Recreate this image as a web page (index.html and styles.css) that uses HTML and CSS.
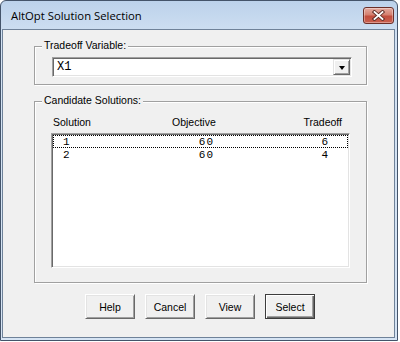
FILE: index.html
```html
<!DOCTYPE html>
<html lang="en">
<head>
    <meta charset="UTF-8">
    <title>AltOpt Solution Selection</title>
    <link rel="stylesheet" href="styles.css">
</head>
<body>
    <div class="window">
        <div class="titlebar">
            <span class="title">AltOpt Solution Selection</span>
            <span class="close-btn">
                <svg width="13" height="11" viewBox="0 0 13 11">
                    <path d="M2.5 2 L10.5 9 M10.5 2 L2.5 9" stroke="#5a2a24" stroke-width="3.6" stroke-linecap="square" fill="none"/>
                    <path d="M2.5 2 L10.5 9 M10.5 2 L2.5 9" stroke="#ffffff" stroke-width="1.8" stroke-linecap="square" fill="none"/>
                </svg>
            </span>
        </div>

        <div class="client">
            <div class="group group-var">
                <span class="group-title">Tradeoff Variable:</span>
                <div class="combo">
                    <span class="combo-text">X1</span>
                    <span class="combo-btn"><span class="arrow"></span></span>
                </div>
            </div>

            <div class="group group-cand">
                <span class="group-title">Candidate Solutions:</span>
                <div class="list-head">
                    <span>Solution</span>
                    <span>Objective</span>
                    <span class="head-right">Tradeoff</span>
                </div>
                <div class="listbox">
                    <div class="row focused"><span class="c1">1</span><span class="c2">60</span><span class="c3">6</span></div>
                    <div class="row"><span class="c1">2</span><span class="c2">60</span><span class="c3">4</span></div>
                </div>
            </div>

            <div class="buttons">
                <button class="btn">Help</button>
                <button class="btn">Cancel</button>
                <button class="btn">View</button>
                <button class="btn btn-default">Select</button>
            </div>
        </div>
    </div>
</body>
</html>
```

FILE: styles.css
```css
* {
    box-sizing: border-box;
}

body {
    margin: 0;
    background-color: #ffffff;
    font-family: "Liberation Sans", Arial, sans-serif;
    font-size: 10.5px;
    color: #000;
    overflow: hidden;
}

/* marco de la ventana */
.window {
    width: 398px;
    height: 341px;
    border: 1px solid #44546a;
    border-radius: 6px 6px 0 0;
    background: linear-gradient(#bcd2eb, #d3e2f3 40px, #d6e4f4);
    padding: 0 2px 2px 1px;
    display: flex;
    flex-direction: column;
}

.titlebar {
    position: relative;
    height: 28px;
    padding: 1px 0 0 9px;
}

.title {
    font-family: "Open Sans", sans-serif;
    font-size: 11.3px;
    line-height: 27px;
    color: #000;
}

.close-btn {
    position: absolute;
    top: 6px;
    right: 1px;
    width: 31px;
    height: 17px;
    border: 1px solid #6b2f28;
    border-radius: 3px;
    background: linear-gradient(#e4aca1, #d5806f 45%, #c24e3e 55%, #c9604f);
    box-shadow: inset 0 0 0 1px rgba(255, 255, 255, 0.35);
    display: flex;
    align-items: center;
    justify-content: center;
}

.close-btn svg {
    display: block;
}

/* area cliente */
.client {
    flex: 1;
    background-color: #f0f0f0;
    border: 1px solid #6f8299;
    padding: 16px 0 0 31px;
}

.group {
    position: relative;
    width: 333px;
    border: 1px solid #a0a0a0;
    box-shadow: 1px 1px 0 #fff, inset 1px 1px 0 #fff;
}

.group-title {
    position: absolute;
    top: -8px;
    left: 7px;
    padding: 0 2px;
    line-height: 13px;
    background-color: #f0f0f0;
}

.group-var {
    height: 39px;
    padding: 10px 0 0 17px;
}

.group-cand {
    height: 182px;
    margin-top: 16px;
    padding: 14px 0 0 16px;
}

/* combo */
.combo {
    width: 300px;
    height: 20px;
    background-color: #fff;
    border: 1px solid;
    border-color: #a0a0a0 #fff #fff #a0a0a0;
    box-shadow: inset 1px 1px 0 #696969, inset -1px -1px 0 #e3e3e3;
    padding: 1px;
    display: flex;
}

.combo-text {
    flex: 1;
    padding-left: 3px;
    font-family: "Liberation Mono", monospace;
    font-size: 12px;
    line-height: 16px;
}

.combo-btn {
    width: 17px;
    height: 16px;
    background-color: #f0f0f0;
    border: 1px solid;
    border-color: #e3e3e3 #696969 #696969 #e3e3e3;
    box-shadow: inset 1px 1px 0 #fff, inset -1px -1px 0 #a0a0a0;
    display: flex;
    align-items: center;
    justify-content: center;
}

.arrow {
    width: 0;
    height: 0;
    border-top: 4px solid #000;
    border-left: 3.5px solid transparent;
    border-right: 3.5px solid transparent;
    margin-top: 1px;
}

/* lista */
.list-head {
    width: 299px;
    height: 13px;
    line-height: 13px;
    padding: 0 8px 0 2px;
    display: grid;
    grid-template-columns: 119px 1fr auto;
}

.listbox {
    width: 299px;
    height: 135px;
    margin-top: 4px;
    background-color: #fff;
    border: 1px solid;
    border-color: #a0a0a0 #fff #fff #a0a0a0;
    box-shadow: inset 1px 1px 0 #696969, inset -1px -1px 0 #e3e3e3;
    padding: 1px;
}

.row {
    height: 13px;
    border: 1px solid transparent;
    display: grid;
    grid-template-columns: 100px 60px 114px;
    font-family: "Liberation Mono", monospace;
    font-size: 11px;
    line-height: 12px;
}

.row.focused {
    border: 1px dotted #000;
}

.c1 {
    padding-left: 9px;
}

.c2,
.c3 {
    text-align: right;
}

.c2 {
    letter-spacing: 1px;
}

/* botones */
.buttons {
    margin-top: 11px;
    padding-left: 51px;
    display: flex;
    gap: 10px;
}

.btn {
    width: 50px;
    height: 25px;
    padding: 0;
    font-family: "Liberation Sans", Arial, sans-serif;
    font-size: 10.5px;
    color: #000;
    background-color: #f0f0f0;
    border: 1px solid;
    border-color: #fff #696969 #696969 #fff;
    box-shadow: inset 1px 1px 0 #e3e3e3, inset -1px -1px 0 #a0a0a0;
}

.btn-default {
    border: 1px solid #3c3c3c;
    box-shadow: inset 1px 1px 0 #fff, inset -1px -1px 0 #696969, inset -2px -2px 0 #a0a0a0;
}
```
